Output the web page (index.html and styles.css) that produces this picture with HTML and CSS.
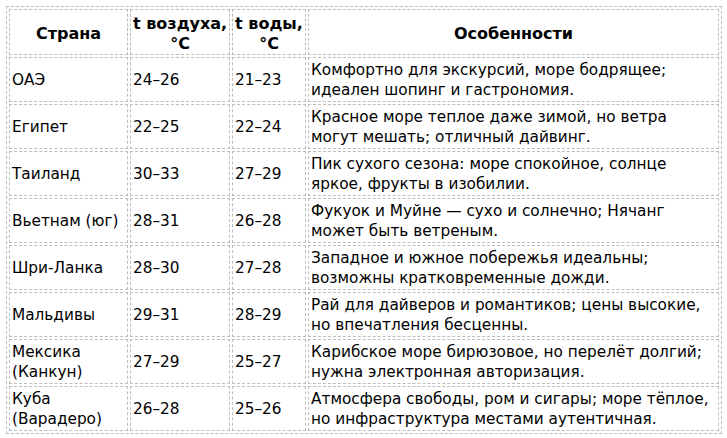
FILE: index.html
```html
<!DOCTYPE html>
<html lang="ru">
<head>
<meta charset="utf-8">
<link rel="stylesheet" href="styles.css">
</head>
<body>
<table class="climate">
  <colgroup>
    <col class="c-country">
    <col class="c-air">
    <col class="c-water">
    <col class="c-notes">
  </colgroup>
  <thead>
    <tr>
      <th>Страна</th>
      <th>t воздуха,<br>°C</th>
      <th>t воды,<br>°C</th>
      <th>Особенности</th>
    </tr>
  </thead>
  <tbody>
    <tr><td>ОАЭ</td><td>24–26</td><td>21–23</td><td>Комфортно для экскурсий, море бодрящее;<br>идеален шопинг и гастрономия.</td></tr>
    <tr><td>Египет</td><td>22–25</td><td>22–24</td><td>Красное море теплое даже зимой, но ветра<br>могут мешать; отличный дайвинг.</td></tr>
    <tr><td>Таиланд</td><td>30–33</td><td>27–29</td><td>Пик сухого сезона: море спокойное, солнце<br>яркое, фрукты в изобилии.</td></tr>
    <tr><td>Вьетнам (юг)</td><td>28–31</td><td>26–28</td><td>Фукуок и Муйне — сухо и солнечно; Нячанг<br>может быть ветреным.</td></tr>
    <tr><td>Шри-Ланка</td><td>28–30</td><td>27–28</td><td>Западное и южное побережья идеальны;<br>возможны кратковременные дожди.</td></tr>
    <tr><td>Мальдивы</td><td>29–31</td><td>28–29</td><td>Рай для дайверов и романтиков; цены высокие,<br>но впечатления бесценны.</td></tr>
    <tr><td>Мексика<br>(Канкун)</td><td>27–29</td><td>25–27</td><td>Карибское море бирюзовое, но перелёт долгий;<br>нужна электронная авторизация.</td></tr>
    <tr><td>Куба<br>(Варадеро)</td><td>26–28</td><td>25–26</td><td>Атмосфера свободы, ром и сигары; море тёплое,<br>но инфраструктура местами аутентичная.</td></tr>
  </tbody>
</table>
</body>
</html>
```

FILE: styles.css
```css
html, body {
  margin: 0;
  padding: 0;
  background: #ffffff;
}

body {
  padding: 6px 0 0 6px;
  font-family: "DejaVu Sans", sans-serif;
  font-size: 15.3px;
  color: #000000;
}

.climate {
  width: 715px;
  table-layout: fixed;
  border-collapse: separate;
  border-spacing: 2px;
  border: 1px dashed #bdbdbd;
}

.c-country { width: 119px; }
.c-air { width: 100px; }
.c-water { width: 74px; }
.c-notes { width: 411px; }

.climate th,
.climate td {
  border: 1px dashed #bdbdbd;
  padding: 1px 2px;
  line-height: 20px;
  vertical-align: middle;
  white-space: nowrap;
  overflow: hidden;
}

.climate th {
  font-size: 16px;
  font-weight: bold;
  text-align: center;
  height: 41px;
  padding-top: 3px;
  padding-bottom: 0;
}

.climate td {
  text-align: left;
  height: 41px;
}
```
